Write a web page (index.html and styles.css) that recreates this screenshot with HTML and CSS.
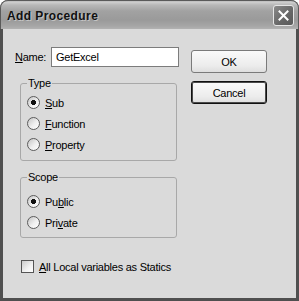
FILE: index.html
```html
<!DOCTYPE html>
<html lang="en">
<head>
    <meta charset="UTF-8">
    <title>Add Procedure</title>
    <link rel="stylesheet" href="styles.css">
</head>
<body>

    <div class="window">
        <div class="titlebar">
            <span class="title">Add Procedure</span>
            <button class="close-btn" aria-label="Close">
                <svg width="11" height="11" viewBox="0 0 11 11">
                    <path d="M1.5 1.5 L9.5 9.5 M9.5 1.5 L1.5 9.5" stroke="#fff" stroke-width="2" stroke-linecap="square"/>
                </svg>
            </button>
        </div>

        <div class="client">
            <div class="main">
                <div class="name-row">
                    <label for="procName"><u>N</u>ame:</label>
                    <input type="text" id="procName" value="GetExcel">
                </div>

                <fieldset class="group type-group">
                    <legend>Type</legend>
                    <label class="opt"><input type="radio" name="type" checked><span><u>S</u>ub</span></label>
                    <label class="opt"><input type="radio" name="type"><span><u>F</u>unction</span></label>
                    <label class="opt"><input type="radio" name="type"><span><u>P</u>roperty</span></label>
                </fieldset>

                <fieldset class="group scope-group">
                    <legend>Scope</legend>
                    <label class="opt"><input type="radio" name="scope" checked><span>Pu<u>b</u>lic</span></label>
                    <label class="opt"><input type="radio" name="scope"><span>Pri<u>v</u>ate</span></label>
                </fieldset>

                <label class="check"><input type="checkbox"><span><u>A</u>ll Local variables as Statics</span></label>
            </div>

            <div class="buttons">
                <button class="btn">OK</button>
                <button class="btn btn-focus">Cancel</button>
            </div>
        </div>
    </div>

</body>
</html>
```

FILE: styles.css
```css
/* General Styles */
body {
    margin: 0;
    font-family: "Liberation Sans", Arial, sans-serif;
    font-size: 11px;
    letter-spacing: -0.25px;
    color: #000;
}

/* Window frame */
.window {
    width: 299px;
    height: 301px;
    box-sizing: border-box;
    background: #4f4f4f;
    border-radius: 8px 8px 0 0;
    display: flex;
    flex-direction: column;
    overflow: hidden;
}

.titlebar {
    height: 29px;
    flex: none;
    display: flex;
    align-items: center;
    justify-content: space-between;
    padding: 0 5px 0 7px;
    background: linear-gradient(#9a9a9a 0, #d0d0d0 2px, #b8b8b8 5px, #a2a2a2 11px, #9a9a9a 20px, #a6a6a6 26px, #b2b2b2 29px);
    box-shadow: inset 0 1px 0 #5a5a5a, inset 1px 0 0 #5a5a5a, inset -1px 0 0 #5a5a5a;
    border-radius: 8px 8px 0 0;
}

.title {
    font-weight: bold;
    font-size: 12px;
    letter-spacing: 0.4px;
    color: #111;
    text-shadow: 1px 1px 0 #c4c4c4;
    padding-top: 3px;
}

.close-btn {
    width: 21px;
    height: 21px;
    margin-top: 1px;
    padding: 0;
    border: 1px solid #e6e6e6;
    border-radius: 3px;
    background: linear-gradient(135deg, #8a8a8a, #666 60%, #5a5a5a);
    display: flex;
    align-items: center;
    justify-content: center;
}

/* Dialog body */
.client {
    flex: 1;
    margin: 0 3px 3px;
    background: #dadada;
    display: flex;
}

.main {
    width: 188px;
    flex: none;
    box-sizing: border-box;
    padding: 18px 0 0 12px;
}

.name-row {
    display: flex;
    align-items: center;
    height: 20px;
}

.name-row label {
    width: 36px;
}

.name-row input {
    width: 128px;
    height: 20px;
    box-sizing: border-box;
    margin: 0;
    padding: 0 0 0 4px;
    border: 1px solid #7c7c7c;
    background: #fff;
    font: inherit;
    letter-spacing: inherit;
    outline: none;
}

/* Group boxes */
.group {
    width: 157px;
    box-sizing: border-box;
    margin: 10px 0 0 5px;
    border: 1px solid #a8a8a8;
    border-radius: 3px;
    padding: 2px 0 5px 6px;
}

.group legend {
    padding: 0 1px;
    line-height: 13px;
}

.scope-group {
    padding-top: 7px;
    padding-bottom: 4px;
}

.opt {
    display: flex;
    align-items: center;
    height: 21px;
}

.opt input {
    appearance: none;
    width: 13px;
    height: 13px;
    margin: 0 5px 0 0;
    border: 1px solid #5c5c5c;
    border-radius: 50%;
    background: linear-gradient(135deg, #c4c4c4, #efefef 55%, #fff);
}

.opt input:checked {
    background: radial-gradient(circle, #111 0 2.3px, transparent 2.8px), linear-gradient(135deg, #c4c4c4, #efefef 55%, #fff);
}

/* Checkbox */
.check {
    display: flex;
    align-items: center;
    height: 13px;
    margin: 22px 0 0 6px;
}

.check input {
    appearance: none;
    width: 13px;
    height: 13px;
    margin: 0 5px 0 0;
    border: 1px solid #555;
    background: linear-gradient(135deg, #cbcbcb, #f2f2f2 60%, #fff);
}

/* Buttons */
.buttons {
    display: flex;
    flex-direction: column;
    gap: 8px;
    padding-top: 21px;
}

.btn {
    width: 76px;
    height: 23px;
    padding: 0;
    border: 1px solid #7a7a7a;
    border-radius: 3px;
    background: linear-gradient(#fafafa, #ececec 70%, #dedede);
    font: inherit;
    letter-spacing: inherit;
    color: #000;
}

.btn-focus {
    border-color: #111;
    box-shadow: inset 0 0 0 1px #4a4a4a;
}
```
